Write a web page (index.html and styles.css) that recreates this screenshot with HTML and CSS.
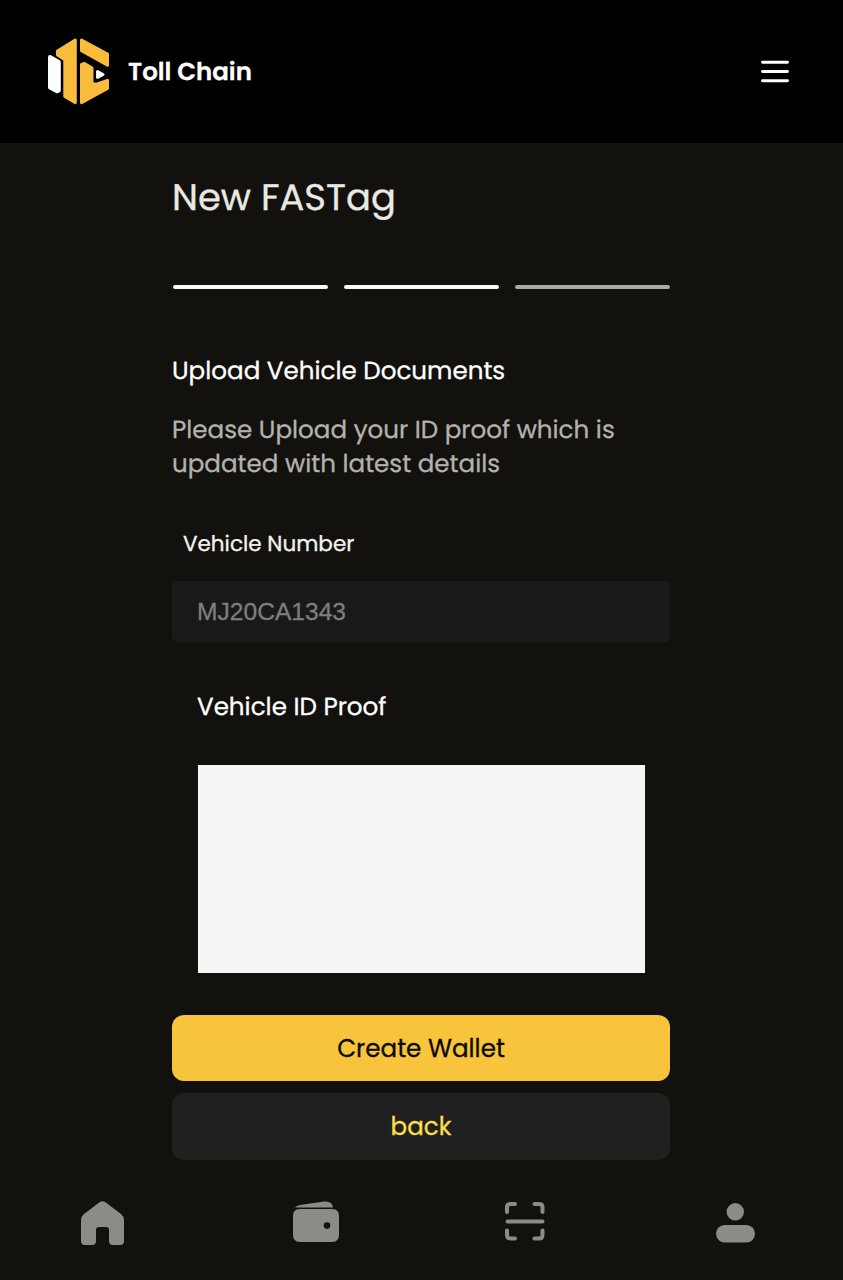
FILE: index.html
```html
<!DOCTYPE html>
<html lang="en">
<head>
<meta charset="utf-8">
<title>Toll Chain</title>
<link rel="stylesheet" href="styles.css">
</head>
<body>
<header class="header">
  <div class="brand">
    <svg class="logo" viewBox="47 37 64 69">
      <g fill="#fff" stroke="#fff" stroke-width="4" stroke-linejoin="round">
        <path d="M50 57L58.800 62V90.500L57 91.300L50 87.500Z"/>
        <path stroke-width="3" d="M97.500 71.500L103 74.500L97.500 77.300Z"/>
      </g>
      <g fill="#f9bc3c" stroke="#f9bc3c" stroke-width="3" stroke-linejoin="round">
        <path d="M75.300 40L57.500 51V55L64.800 59.800V96.500L75.300 102.600Z"/>
        <path d="M81.500 40L107.500 54V65.300L81.500 50.800Z"/>
        <path d="M81.500 64.500L84.500 63.500L92 68V84L98 83.700L107.500 80.300V88.500L81.500 102.600Z"/>
      </g>
    </svg>
    <span class="brand-name">Toll Chain</span>
  </div>
  <svg class="menu" viewBox="0 0 28 23"><path d="M1.500 2.200H26.500M1.500 11.500H26.500M1.500 20.800H26.500" stroke="#fff" stroke-width="2.900" stroke-linecap="round"/></svg>
</header>
<main class="main">
  <h1 class="title">New FASTag</h1>
  <div class="steps"><i class="step"></i><i class="step"></i><i class="step step-pending"></i></div>
  <h2 class="heading">Upload Vehicle Documents</h2>
  <p class="description">Please Upload your ID proof which is updated with latest details</p>
  <label class="label" for="vehicle">Vehicle Number</label>
  <input class="input" id="vehicle" placeholder="MJ20CA1343">
  <div class="proof">
    <h3 class="proof-title">Vehicle ID Proof</h3>
    <div class="preview"></div>
  </div>
  <button class="button primary">Create Wallet</button>
  <button class="button secondary">back</button>
</main>
<nav class="nav">
  <svg class="home" viewBox="0 0 43 44"><path d="M18.500 1.300Q21.500-1 24.500 1.300L40 13Q43 15.500 43 19V40Q43 44 39 44H32Q28 44 28 40V29Q28 26 25 26H18Q15 26 15 29V40Q15 44 11 44H4Q0 44 0 40V19Q0 15.500 3 13Z"/></svg>
  <svg class="wallet" viewBox="0 0 46 42"><path d="M2 6.500Q3.500 4.500 7 4L31 .500Q39-.500 40 6.500Z"/><path fill-rule="evenodd" d="M7 8H39Q46 8 46 15V34Q46 41 39 41H7Q0 41 0 34V15Q0 8 7 8ZM34 21.300A3.300 3.300 0 1 0 34 27.900A3.300 3.300 0 1 0 34 21.300Z"/></svg>
  <svg class="scan" viewBox="0 0 40 40"><path d="M2 11V6Q2 3 5.500 3H10M29.500 3H34Q37.500 3 37.500 6V11M2 29.500V34Q2 37.500 5.500 37.500H10M29.500 37.500H34Q37.500 37.500 37.500 34V29.500M2.500 20.500H37.500"/></svg>
  <svg class="user" viewBox="0 0 39 40"><circle cx="19.300" cy="8.800" r="8.700"/><rect y="22" width="39" height="17.500" rx="8.700"/></svg>
</nav>
</body>
</html>
```
FILE: styles.css
```css
* { box-sizing: border-box; }
body {
  margin: 0;
  height: 1280px;
  overflow: hidden;
  background: #12110d;
  color: #fff;
  font-family: Poppins, Inter, sans-serif;
  font-size: 24.6px;
  line-height: 34px;
  text-rendering: geometricPrecision;
  -webkit-text-stroke: 0.3px currentColor;
  display: flex;
  flex-direction: column;
}
h1, h2, h3, p { margin: 0; font-weight: 400; }
.header {
  height: 143px;
  flex: none;
  padding: 0 54px 0 47px;
  background: #000;
  display: flex;
  align-items: center;
  justify-content: space-between;
}
.brand { display: flex; align-items: center; gap: 17px; }
.logo { width: 64px; height: 69px; }
.brand-name { font-size: 24.5px; font-weight: 600; }
.menu { width: 28px; height: 23px; }
.main {
  width: 498px;
  margin-left: 172px;
  display: flex;
  flex-direction: column;
}
.title { margin-top: 31px; font-size: 36.9px; line-height: 46px; color: #eae9e5; }
.steps { margin: 65px 0 65px 1px; display: flex; gap: 16px; }
.step { flex: 1; height: 4px; border-radius: 2px; background: #fbfaf7; }
.step-pending { background: #aaa9a5; }
.heading { font-size: 24.6px; }
.description { width: 460px; margin-top: 25px; color: #b3b2ae; }
.label { margin: 46px 0 20px 11px; font-size: 21.5px; color: #f3f2ee; }
.input {
  height: 61px;
  padding: 1px 25px 0;
  border: 0;
  border-radius: 5px;
  background: #191919;
  color: #fff;
  font: 24.6px "Liberation Sans", sans-serif;
}
.input::placeholder { color: #7e7e7e; opacity: 1; }
.proof { margin: 48px 25px 42px 26px; }
.proof-title { font-size: 24.6px; margin-left: -1px; }
.preview { margin-top: 41px; height: 208px; background: #f5f5f5; }
.button {
  height: 66px;
  padding: 1px 0 0;
  border: 0;
  border-radius: 12px;
  font: inherit;
}
.primary { background: #f8c43c; color: #0c0a04; }
.secondary { height: 67px; margin-top: 12px; background: #202020; color: #f8df4c; }
.nav {
  margin-top: 41px;
  padding-left: 81px;
  display: flex;
  align-items: flex-start;
  fill: #8b8b87;
}
.home { width: 43px; height: 44px; }
.wallet { width: 46px; height: 42px; margin-left: 169px; }
.scan { width: 40px; height: 40px; margin-left: 166px; fill: none; stroke: #8b8b87; stroke-width: 4; stroke-linecap: round; }
.user { width: 39px; height: 40px; margin: 2px 0 0 171px; }
```
